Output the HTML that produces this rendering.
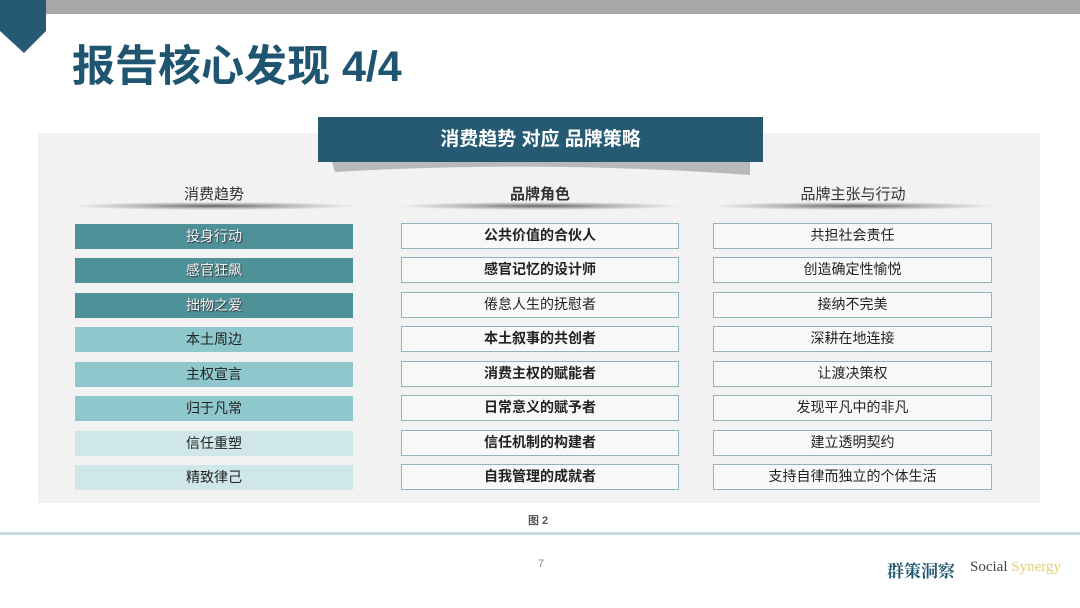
<!DOCTYPE html>
<html><head><meta charset="utf-8"><style>
*{margin:0;padding:0;box-sizing:border-box}
body{width:1080px;height:608px;background:#fff;position:relative;overflow:hidden;font-family:"Liberation Sans","Noto Sans CJK SC",sans-serif}
.a{position:absolute}
.topbar{left:46px;top:0;width:1034px;height:14px;background:#a8a8a8}
.title{left:72px;top:42px;font-size:43px;font-weight:bold;color:#1f5570;line-height:50px}
.panel{left:38px;top:133px;width:1002px;height:370px;background:#f2f2f2}
.banner{left:318px;top:117px;width:445px;height:45px;background:#255a72;color:#fff;font-size:19px;font-weight:bold;text-align:center;line-height:45px}
.hd{font-size:15px;color:#333;text-align:center;width:280px;top:183px}
.sh{height:8px;width:280px;top:202px;background:radial-gradient(ellipse at center,#666 0%,#bbb 40%,rgba(242,242,242,0) 72%)}
.b{height:25px;width:278px;text-align:center;font-size:14px;line-height:25px;color:#222}
.c1{left:75px}
.c2{left:401px;background:#f7f8f8;border:1.5px solid #8fb6bf;font-weight:bold;line-height:22px;height:26px}
.c3{left:713px;width:279px;background:#f7f8f8;border:1.5px solid #8fb6bf;line-height:22px;height:26px}
.d{background:#4f9199;color:#f4f4f4;text-shadow:1px 1px 1px #333}
.m{background:#8ec7cc}
.l{background:#cfe7e9}
</style></head><body>
<div class="a topbar"></div>
<svg class="a" style="left:0;top:0" width="48" height="54"><polygon points="0,0 46,0 46,31 24,53 0,31" fill="#255a72"/></svg>
<div class="a title">报告核心发现 4/4</div>
<div class="a panel"></div>
<svg class="a" style="left:330px;top:160px" width="425" height="16"><path d="M2,2 L420,2 L420,15 Q210,0 5,12 Z" fill="#b9b9b9"/></svg>
<div class="a banner">消费趋势 对应 品牌策略</div>
<div class="a hd" style="left:74px">消费趋势</div>
<div class="a hd" style="left:400px;font-weight:bold">品牌角色</div>
<div class="a hd" style="left:713px">品牌主张与行动</div>
<div class="a sh" style="left:74px"></div>
<div class="a sh" style="left:400px"></div>
<div class="a sh" style="left:713px"></div>

<div class="a b c1 d" style="top:224px">投身行动</div>
<div class="a b c1 d" style="top:258px">感官狂飙</div>
<div class="a b c1 d" style="top:293px">拙物之爱</div>
<div class="a b c1 m" style="top:327px">本土周边</div>
<div class="a b c1 m" style="top:362px">主权宣言</div>
<div class="a b c1 m" style="top:396px">归于凡常</div>
<div class="a b c1 l" style="top:431px">信任重塑</div>
<div class="a b c1 l" style="top:465px">精致律己</div>

<div class="a b c2" style="top:223px">公共价值的合伙人</div>
<div class="a b c2" style="top:257px">感官记忆的设计师</div>
<div class="a b c2" style="top:292px;font-weight:normal">倦怠人生的抚慰者</div>
<div class="a b c2" style="top:326px">本土叙事的共创者</div>
<div class="a b c2" style="top:361px">消费主权的赋能者</div>
<div class="a b c2" style="top:395px">日常意义的赋予者</div>
<div class="a b c2" style="top:430px">信任机制的构建者</div>
<div class="a b c2" style="top:464px">自我管理的成就者</div>

<div class="a b c3" style="top:223px">共担社会责任</div>
<div class="a b c3" style="top:257px">创造确定性愉悦</div>
<div class="a b c3" style="top:292px">接纳不完美</div>
<div class="a b c3" style="top:326px">深耕在地连接</div>
<div class="a b c3" style="top:361px">让渡决策权</div>
<div class="a b c3" style="top:395px">发现平凡中的非凡</div>
<div class="a b c3" style="top:430px">建立透明契约</div>
<div class="a b c3" style="top:464px">支持自律而独立的个体生活</div>

<div class="a" style="left:528px;top:512px;font-size:11px;font-weight:bold;color:#555">图 2</div>
<div class="a" style="left:0;top:532px;width:1080px;height:3px;background:#c9dee3"></div>
<div class="a" style="left:538px;top:558px;font-size:11px;color:#888">7</div>
<div class="a" style="left:887px;top:557px;font-family:'Noto Serif CJK SC',serif;font-size:17px;font-weight:bold;color:#1f5570">群策洞察</div>
<div class="a" style="left:970px;top:559px;font-family:'Liberation Serif',serif;font-size:15px;color:#444">Social <span style="color:#e6cf6e">Synergy</span></div>
</body></html>
